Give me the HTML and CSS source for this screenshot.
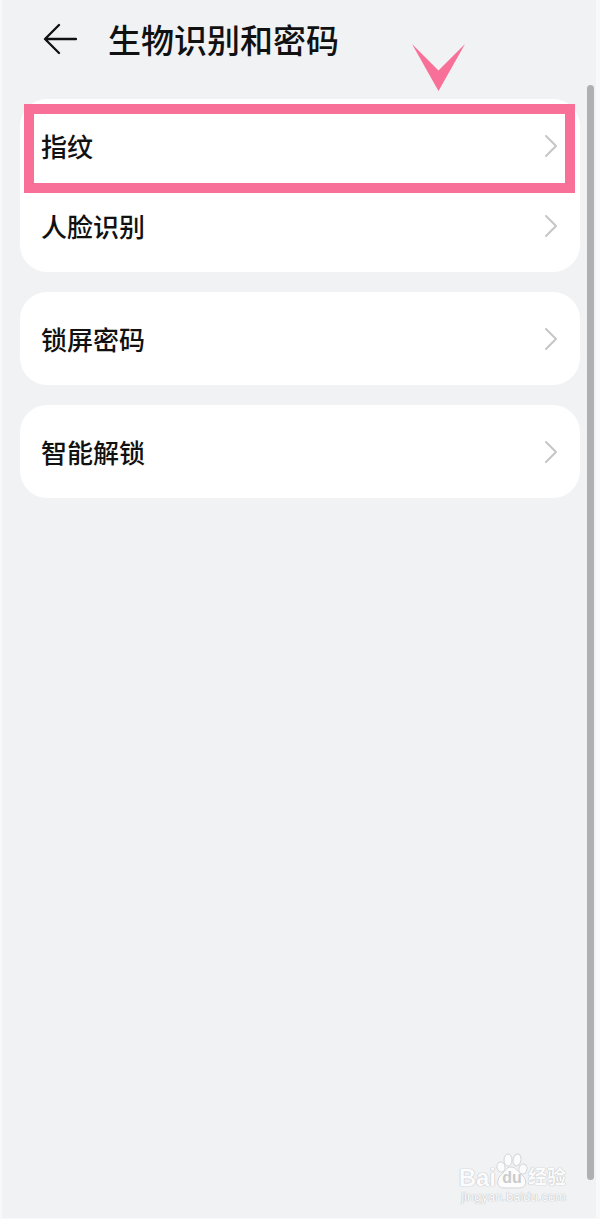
FILE: index.html
```html
<!DOCTYPE html>
<html lang="zh-CN">
<head>
<meta charset="utf-8">
<meta name="viewport" content="width=device-width, initial-scale=1">
<title>生物识别和密码</title>
<link rel="stylesheet" href="styles.css">
</head>
<body>
<div class="page">
  <header class="header">
    <button class="back" type="button" aria-label="返回">
      <svg width="34" height="32" viewBox="0 0 34 32" fill="none" stroke="#111" stroke-width="2.3" stroke-linecap="round" stroke-linejoin="round"><path d="M33 16H2L16 2M2 16L16 30"/></svg>
    </button>
    <h1 class="title">生物识别和密码</h1>
    <svg class="pointer" width="54" height="48" viewBox="0 0 54 48" aria-hidden="true"><path d="M0 0L26.500 26.500L53 0L26.500 47Z" fill="#f87098"/></svg>
  </header>
  <main class="groups">
    <nav class="card">
      <a class="row marked" href="#fingerprint"><span>指纹</span><svg class="chevron" width="14" height="24" viewBox="0 0 14 24"><path d="M2 2L12 12L2 22"/></svg></a>
      <a class="row" href="#face"><span>人脸识别</span><svg class="chevron" width="14" height="24" viewBox="0 0 14 24"><path d="M2 2L12 12L2 22"/></svg></a>
    </nav>
    <nav class="card">
      <a class="row" href="#password"><span>锁屏密码</span><svg class="chevron" width="14" height="24" viewBox="0 0 14 24"><path d="M2 2L12 12L2 22"/></svg></a>
    </nav>
    <nav class="card">
      <a class="row" href="#smart"><span>智能解锁</span><svg class="chevron" width="14" height="24" viewBox="0 0 14 24"><path d="M2 2L12 12L2 22"/></svg></a>
    </nav>
  </main>
  <footer class="watermark">
    <div class="brand">
      <span>Bai</span>
      <span class="paw">
        <svg width="32" height="36" viewBox="0 0 32 36" aria-hidden="true"><g fill="#fcfcfd" stroke="#d3d5d7" stroke-width="1"><ellipse cx="5" cy="14" rx="4" ry="5" transform="rotate(-12 5 14)"/><ellipse cx="12" cy="7" rx="4" ry="6"/><ellipse cx="21" cy="7" rx="4" ry="6" transform="rotate(10 21 7)"/><ellipse cx="27" cy="16" rx="4" ry="5" transform="rotate(14 27 16)"/><path d="M15 14C20 14 22 19 27 23C32 28 30 35 23 35H8C1 35 0 28 4 23C9 19 10 14 15 14Z"/></g></svg>
        <span class="du">du</span>
      </span>
      <span class="cn">经验</span>
    </div>
    <div class="url">jingyan.baidu.com</div>
  </footer>
  <div class="scrollbar"></div>
</div>
</body>
</html>
```
FILE: styles.css
```css
* {
  box-sizing: border-box;
}

body {
  margin: 0;
  background: #f8f9fa;
  font-family: "Noto Sans CJK SC", sans-serif;
  color: #111;
}

.page {
  position: relative;
  display: flex;
  flex-direction: column;
  min-height: 100vh;
  background: #f0f2f4;
  border: solid #f8f9fa;
  border-width: 0 4px 1px 2px;
}

.header {
  position: relative;
  display: flex;
  align-items: center;
  gap: 31px;
  height: 77px;
  padding-left: 41px;
}

.back {
  display: flex;
  padding: 0;
  border: 0;
  background: none;
}

.title {
  margin: 0;
  font-size: 33px;
  line-height: 40px;
  font-weight: 500;
}

.pointer {
  position: absolute;
  top: 44px;
  right: 130px;
}

.groups {
  display: flex;
  flex-direction: column;
  gap: 20px;
  padding: 22px 16px 20px 18px;
}

.card {
  padding: 7px 0 6px;
  border-radius: 27px;
  background: #fff;
}

.row {
  position: relative;
  display: flex;
  align-items: center;
  justify-content: space-between;
  height: 80px;
  padding: 0 22px 0 21px;
  color: inherit;
  font-size: 26px;
  line-height: 40px;
  font-weight: 500;
  text-decoration: none;
}

.marked::after {
  content: "";
  position: absolute;
  inset: -2px 5px -7px 4px;
  border: 10px solid #f87098;
}

.chevron {
  fill: none;
  stroke: #c6c6c8;
  stroke-width: 2;
  stroke-linecap: round;
  stroke-linejoin: round;
}

.watermark {
  display: flex;
  flex-direction: column;
  margin-top: auto;
  padding: 0 30px 13px;
  align-items: flex-end;
  color: #fcfcfd;
  font-family: "Liberation Sans", "Noto Sans CJK SC", sans-serif;
  text-shadow: 0 0 1px #b8babc, 0 0 1px #b8babc;
}

.brand {
  display: flex;
  align-items: flex-end;
  font-size: 24px;
  line-height: 22px;
  font-weight: 700;
}

.paw {
  position: relative;
  display: flex;
}

.du {
  position: absolute;
  inset: 16px 0 0;
  color: #c9cbcd;
  font-size: 16px;
  line-height: 18px;
  text-align: center;
  text-shadow: none;
}

.cn {
  font-size: 19px;
}

.url {
  font-size: 13px;
  line-height: 16px;
}

.scrollbar {
  position: absolute;
  top: 85px;
  right: 2px;
  bottom: 38px;
  width: 7px;
  border-radius: 4px;
  background: #aeb0b2;
}
```
